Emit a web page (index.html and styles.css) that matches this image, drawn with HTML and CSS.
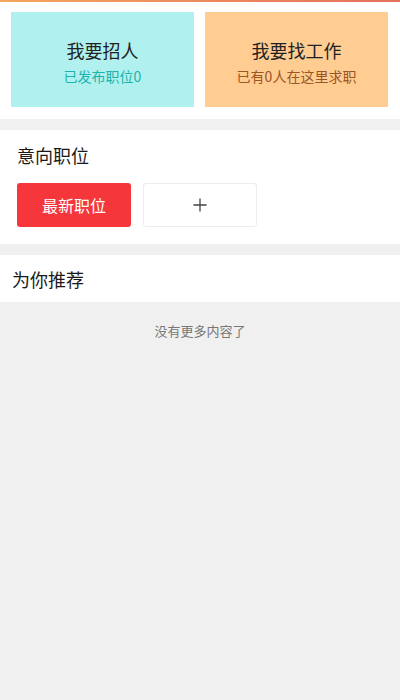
FILE: index.html
```html
<!DOCTYPE html>
<html lang="zh-CN">
<head>
  <meta charset="UTF-8" />
  <title>招聘</title>
  <link rel="stylesheet" href="styles.css">
</head>
<body>

  <div class="topline"></div>

  <div class="entry">
    <div class="card card-hire">
      <div class="card-title">我要招人</div>
      <div class="card-sub">已发布职位0</div>
    </div>
    <div class="card card-seek">
      <div class="card-title">我要找工作</div>
      <div class="card-sub">已有0人在这里求职</div>
    </div>
  </div>

  <div class="intent">
    <div class="section-title">意向职位</div>
    <div class="tags">
      <div class="tag tag-active">最新职位</div>
      <div class="tag tag-add">
        <svg width="14" height="14" viewBox="0 0 14 14">
          <path d="M7 0.5V13.5M0.5 7H13.5" stroke="#444" stroke-width="1.3" fill="none"/>
        </svg>
      </div>
    </div>
  </div>

  <div class="recommend">
    <div class="section-title">为你推荐</div>
  </div>

  <div class="empty">没有更多内容了</div>

</body>
</html>
```

FILE: styles.css
```css
body {
  margin: 0;
  background: #f0f0f0;
  font-family: "Noto Sans CJK SC", "Noto Sans", sans-serif;
  color: #222;
}
.topline {
  height: 2px;
  background: linear-gradient(to right, #f3a65e, #e4705c);
}
.entry {
  background: #fff;
  display: grid;
  grid-template-columns: 183px 183px;
  gap: 11px;
  padding: 10px 12px 12px 11px;
}
.card {
  height: 95px;
  display: flex;
  flex-direction: column;
  align-items: center;
  justify-content: center;
}
.card-hire {
  background: #b0f0ee;
}
.card-seek {
  background: #ffcd92;
}
.card-title {
  font-size: 18px;
  line-height: 24px;
  color: #222;
  margin-top: 4px;
}
.card-sub {
  font-size: 14px;
  line-height: 20px;
  margin-top: 4px;
}
.card-hire .card-sub {
  color: #1db3ad;
}
.card-seek .card-sub {
  color: #9b5526;
}
.intent {
  background: #fff;
  margin-top: 11px;
  padding: 13px 17px 17px;
}
.section-title {
  font-size: 18px;
  line-height: 24px;
  color: #1a1a1a;
}
.tags {
  display: flex;
  gap: 12px;
  margin-top: 16px;
}
.tag {
  width: 114px;
  height: 44px;
  box-sizing: border-box;
  border-radius: 3px;
  display: flex;
  align-items: center;
  justify-content: center;
  font-size: 16px;
}
.tag-active {
  background: #f5363a;
  color: #fff;
}
.tag-add {
  background: #fff;
  border: 1px solid #ececec;
}
.recommend {
  background: #fff;
  margin-top: 11px;
  height: 47px;
  padding: 0 12px;
  display: flex;
  align-items: center;
}
.empty {
  text-align: center;
  font-size: 13px;
  color: #777;
  margin-top: 19px;
}
```
